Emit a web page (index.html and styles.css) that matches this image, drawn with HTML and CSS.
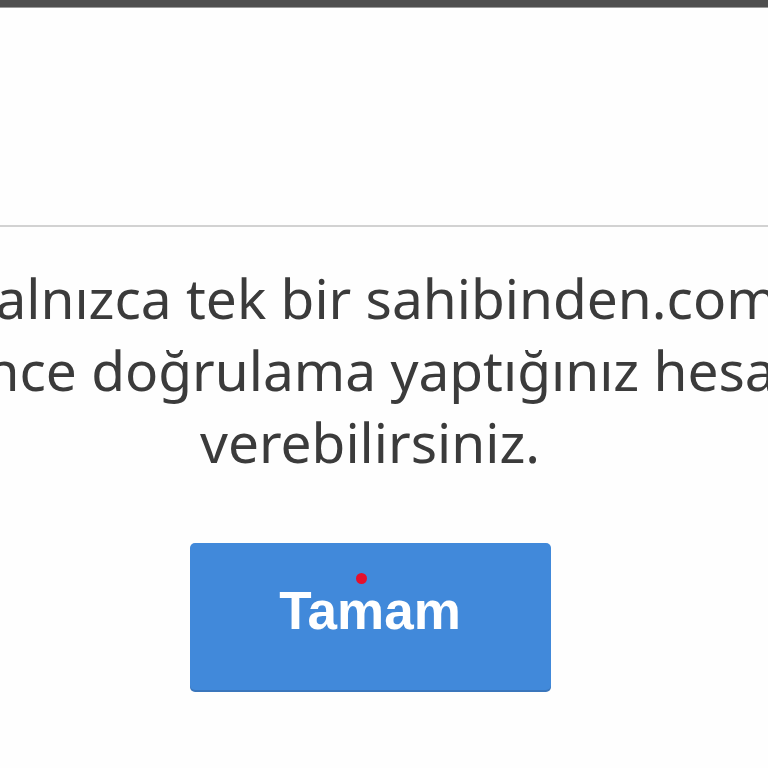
FILE: index.html
```html
<!DOCTYPE html>
<html lang="tr">
<head>
<meta charset="utf-8">
<title>Doğrulama</title>
<link rel="stylesheet" href="styles.css">
</head>
<body>
<div class="topbar"></div>
<div class="header"></div>
<div class="divider"></div>
<div class="content">
  <p class="msg">
    <span class="line line1">Yalnızca tek bir sahibinden.com hesabına</span>
    <span class="line line2">Daha önce doğrulama yaptığınız hesabınıza</span>
    <span class="line line3">verebilirsiniz.</span>
  </p>
  <div class="actions">
    <button class="btn" type="button">Tamam<span class="dot"></span></button>
  </div>
</div>
</body>
</html>
```

FILE: styles.css
```css
html, body {
  margin: 0;
  padding: 0;
  background: #fefefe;
  overflow: hidden;
}
body {
  width: 768px;
  height: 768px;
  font-family: "Noto Sans", "Open Sans", sans-serif;
}
.topbar {
  height: 7px;
  background: #4f4f4f;
  border-bottom: 1px solid #9a9a9a;
}
.header {
  height: 217px;
  background: #fefefe;
}
.divider {
  height: 2px;
  background: #d2d2d2;
}
.content {
  width: 740px;
  display: flex;
  flex-direction: column;
  align-items: center;
}
.msg {
  margin: 35px 0 0;
  width: 740px;
  display: flex;
  flex-direction: column;
  align-items: center;
  font-size: 55px;
  line-height: 72px;
  color: #3b3b3b;
  white-space: nowrap;
}
.line {
  display: block;
}
.line1 {
  align-self: flex-start;
  margin-left: -33px;
}
.line2 {
  align-self: flex-start;
  margin-left: -198px;
}
.actions {
  margin-top: 65px;
  display: flex;
  justify-content: center;
  width: 740px;
}
.btn {
  position: relative;
  width: 361px;
  height: 147px;
  border: none;
  border-radius: 5px;
  background: #4189da;
  box-shadow: 0 2px 0 #3a76bc;
  color: #ffffff;
  font-family: "Liberation Sans", Arial, sans-serif;
  font-weight: bold;
  font-size: 53px;
  padding: 0 0 12px;
  cursor: pointer;
}
.dot {
  position: absolute;
  left: 166px;
  top: 30px;
  width: 11px;
  height: 11px;
  border-radius: 50%;
  background: #e5102c;
}
```
